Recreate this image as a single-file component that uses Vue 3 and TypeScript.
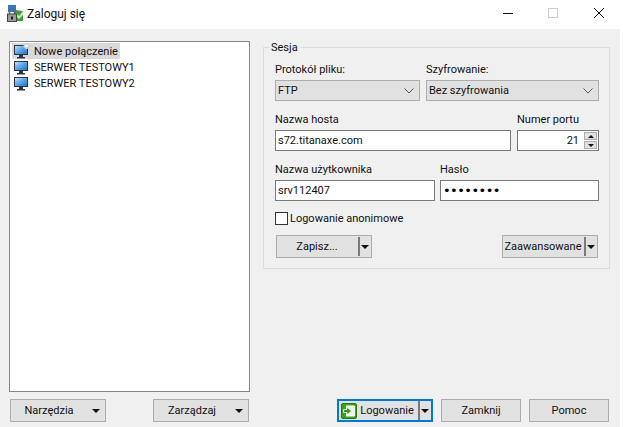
<script setup lang="ts">
interface Site { name: string; isNew?: boolean }
const sites: Site[] = [
  { name: 'Nowe połączenie', isNew: true },
  { name: 'SERWER TESTOWY1' },
  { name: 'SERWER TESTOWY2' },
]
</script>

<template>
  <div class="screen">
    <header class="titlebar">
      <svg class="app-icon" width="17" height="17" viewBox="0 0 17 17">
        <rect x="2" y="0" width="8" height="7" fill="#2f78c4" />
        <path d="M9 5l8 1v10H9z" fill="#3f9a3c" />
        <path d="M10 8l3 3 4-5v4l-4 4-3-3z" fill="#c3ecb2" />
        <path d="M3.500 9V7a2.500 2.500 0 0 1 5 0v2" fill="none" stroke="#666" stroke-width="1.500" />
        <rect x="1.500" y="9" width="9" height="7.500" fill="#9a9a9a" stroke="#444" />
        <rect x="5" y="11.500" width="2" height="3" fill="#222" />
      </svg>
      <span class="title">Zaloguj się</span>
      <div class="win-controls">
        <svg class="ctl ctl-min" width="10" height="10" viewBox="0 0 10 10"><path d="M0 5.500h10" stroke="#111" /></svg>
        <svg class="ctl ctl-max" width="10" height="10" viewBox="0 0 10 10"><rect x=".5" y=".5" width="9" height="9" fill="none" stroke="#ccc" /></svg>
        <svg class="ctl ctl-close" width="10" height="10" viewBox="0 0 10 10"><path d="M0 0l10 10M10 0L0 10" stroke="#111" stroke-width="1" /></svg>
      </div>
    </header>

    <main class="dialog">
      <div class="content">
        <ul class="site-list">
          <li v-for="s in sites" :key="s.name" class="site" :class="{ selected: s.isNew }">
            <svg class="monitor" width="16" height="16" viewBox="0 0 16 16">
              <defs>
                <linearGradient id="scr" x1="0" y1="0" x2="1" y2="1">
                  <stop offset="0" stop-color="#cfe6fa" />
                  <stop offset=".5" stop-color="#5aa5e8" />
                  <stop offset="1" stop-color="#1f6fc0" />
                </linearGradient>
              </defs>
              <rect x=".5" y="2.500" width="13" height="9" fill="url(#scr)" stroke="#2b3440" />
              <rect x="5" y="12" width="4" height="2" fill="#2b3440" />
              <rect x="3" y="14" width="8" height="1.500" fill="#2b3440" />
              <g v-if="s.isNew">
                <circle cx="12.500" cy="3" r="3" fill="#c9d2da" />
                <circle cx="12.500" cy="3" r="1.300" fill="#fff" />
              </g>
            </svg>
            <span class="site-name">{{ s.name }}</span>
          </li>
        </ul>

        <section class="group">
          <span class="legend">Sesja</span>
          <div class="row row-selects">
            <label class="field">
              <span class="lbl">Protokół pliku:</span>
              <span class="select">FTP
                <svg width="10" height="6" viewBox="0 0 10 6"><path d="M.5.500l4.500 4.500 4.500-4.500" fill="none" stroke="#555" /></svg>
              </span>
            </label>
            <label class="field">
              <span class="lbl">Szyfrowanie:</span>
              <span class="select">Bez szyfrowania
                <svg width="10" height="6" viewBox="0 0 10 6"><path d="M.5.500l4.500 4.500 4.500-4.500" fill="none" stroke="#555" /></svg>
              </span>
            </label>
          </div>
          <div class="row row-host">
            <label class="field">
              <span class="lbl">Nazwa hosta</span>
              <span class="input">s72.titanaxe.com</span>
            </label>
            <label class="field">
              <span class="lbl">Numer portu</span>
              <span class="input port">
                <span class="port-val">21</span>
                <span class="spin">
                  <span class="spin-b"><i class="tri up"></i></span>
                  <span class="spin-b"><i class="tri"></i></span>
                </span>
              </span>
            </label>
          </div>
          <div class="row row-user">
            <label class="field">
              <span class="lbl">Nazwa użytkownika</span>
              <span class="input">srv112407</span>
            </label>
            <label class="field">
              <span class="lbl">Hasło</span>
              <span class="input pass">••••••••</span>
            </label>
          </div>
          <label class="check"><span class="box"></span>Logowanie anonimowe</label>
          <div class="row-actions">
            <button class="btn split zapisz"><span class="cap">Zapisz...</span><span class="sep"></span><i class="tri"></i></button>
            <button class="btn split adv"><span class="cap">Zaawansowane</span><span class="sep"></span><i class="tri"></i></button>
          </div>
        </section>
      </div>

      <footer class="footer">
        <button class="btn menu"><span class="cap">Narzędzia</span><i class="tri"></i></button>
        <button class="btn menu second"><span class="cap">Zarządzaj</span><i class="tri"></i></button>
        <button class="btn split login">
          <svg width="16" height="16" viewBox="0 0 16 16">
            <rect x=".5" y=".5" width="15" height="15" rx="1.500" fill="#37a31f" stroke="#1f7a12" />
            <path d="M5 3h8.500v10H5" fill="#e8f6e0" stroke="#fff" />
            <path d="M2.500 6.500H6V4l4.500 4L6 12V9.500H2.500z" fill="#2f9a1e" stroke="#fff" stroke-width=".8" />
          </svg>
          <span class="cap">Logowanie</span><span class="sep"></span><i class="tri"></i>
        </button>
        <button class="btn plain close">Zamknij</button>
        <button class="btn plain">Pomoc</button>
      </footer>
    </main>
  </div>
</template>

<style scoped>
.screen {
  width: 623px;
  height: 427px;
  background: #fff;
  overflow: hidden;
  font-family: Roboto, "Noto Sans", sans-serif;
  font-size: 11px;
  color: #111;
  display: flex;
  flex-direction: column;
}
.titlebar {
  height: 29px;
  flex: none;
  display: flex;
  align-items: center;
  padding-left: 6px;
}
.app-icon { margin-right: 4px; margin-top: -3px; }
.title { font-size: 12px; margin-top: -2px; }
.win-controls {
  margin-left: auto;
  display: flex;
  align-items: center;
  margin-top: -3px;
  padding-right: 19px;
}
.ctl-max { margin-left: 35px; }
.ctl-close { margin-left: 36px; }
.dialog {
  width: 620px;
  height: 398px;
  background: #f0f0f0;
  display: flex;
  flex-direction: column;
}
.content {
  display: flex;
  align-items: flex-start;
  padding: 12px 0 0 9px;
  height: 370px;
  box-sizing: border-box;
}
.site-list {
  width: 241px;
  height: 351px;
  box-sizing: border-box;
  margin: 0;
  padding: 1px 0 0 2px;
  list-style: none;
  background: #fff;
  border: 1px solid #828790;
  flex: none;
}
.site {
  height: 16px;
  width: 108px;
  padding-left: 2px;
  box-sizing: border-box;
  display: flex;
  align-items: center;
}
.site.selected { background: #d9d9d9; }
.monitor { flex: none; margin-right: 4px; }
.site-name {
  white-space: nowrap;
  line-height: 15px;
}
.group {
  width: 347px;
  height: 222px;
  box-sizing: border-box;
  margin: 6px 0 0 13px;
  border: 1px solid #dcdcdc;
  padding: 0 11px;
  display: flex;
  flex-direction: column;
}
.legend {
  align-self: flex-start;
  margin: -8px 0 0 -5px;
  padding: 0 2px 0 1px;
  height: 15px;
  line-height: 15px;
  background: #f0f0f0;
}
.row { display: grid; column-gap: 6px; }
.row-selects { grid-template-columns: 145px 173px; margin-top: 6px; }
.row-host { grid-template-columns: 236px 82px; margin-top: 9px; }
.row-user { grid-template-columns: 160px 159px; margin-top: 9px; column-gap: 5px; }
.field { display: flex; flex-direction: column; }
.lbl { height: 20px; line-height: 20px; }
.row-selects .lbl { height: 19px; line-height: 17px; }
.select {
  height: 21px;
  box-sizing: border-box;
  border: 1px solid #adadad;
  background: #e1e1e1;
  display: flex;
  align-items: center;
  justify-content: space-between;
  padding: 0 5px 0 2px;
}
.input {
  height: 21px;
  box-sizing: border-box;
  border: 1px solid #7a7a7a;
  background: #fff;
  display: flex;
  align-items: center;
  padding-left: 2px;
}
.pass {
  font-family: "DejaVu Sans", sans-serif;
  font-size: 13px;
  letter-spacing: -.55px;
  color: #000;
}
.port { justify-content: flex-end; padding: 0 1px 0 0; }
.port-val { margin-right: 5px; }
.spin { display: flex; flex-direction: column; gap: 1px; }
.spin-b {
  width: 13px;
  height: 8px;
  box-sizing: border-box;
  background: #e1e1e1;
  border: 1px solid #adadad;
  display: flex;
  align-items: center;
  justify-content: center;
}
.spin .tri { border-width: 3px 3px 0; }
.spin .tri.up { border-width: 0 3px 3px; border-color: transparent transparent #111; }
.tri {
  display: block;
  width: 0;
  height: 0;
  border-style: solid;
  border-width: 4px 4.5px 0;
  border-color: #111 transparent transparent;
  flex: none;
}
.check {
  display: flex;
  align-items: center;
  margin-top: 11px;
  height: 13px;
}
.box {
  width: 13px;
  height: 13px;
  box-sizing: border-box;
  border: 1px solid #333;
  background: #fff;
  margin-right: 2px;
}
.row-actions {
  display: flex;
  justify-content: space-between;
  margin: 10px 0 0 1px;
}
.btn {
  font: inherit;
  color: #111;
  height: 23px;
  box-sizing: border-box;
  background: #e1e1e1;
  border: 1px solid #adadad;
  padding: 0;
  display: flex;
  align-items: center;
}
.split { width: 96px; padding-right: 2px; }
.split .cap { flex: 1; text-align: center; white-space: nowrap; }
.sep { width: 2px; height: 19px; background: #7a7a7a; margin: 0 1px 0 1px; flex: none; }
.menu { width: 96px; padding-right: 5px; }
.menu .cap { flex: 1; text-align: center; padding-right: 5px; }
.second { margin-left: 47px; }
.footer {
  display: flex;
  padding: 0 0 0 10px;
}
.login {
  margin-left: 88px;
  border: 2px solid #0078d7;
  padding-left: 2px;
}
.login svg { flex: none; }
.plain { width: 80px; justify-content: center; margin-left: 8px; }
</style>
<style>
html, body { margin: 0; background: #fff; }
</style>
